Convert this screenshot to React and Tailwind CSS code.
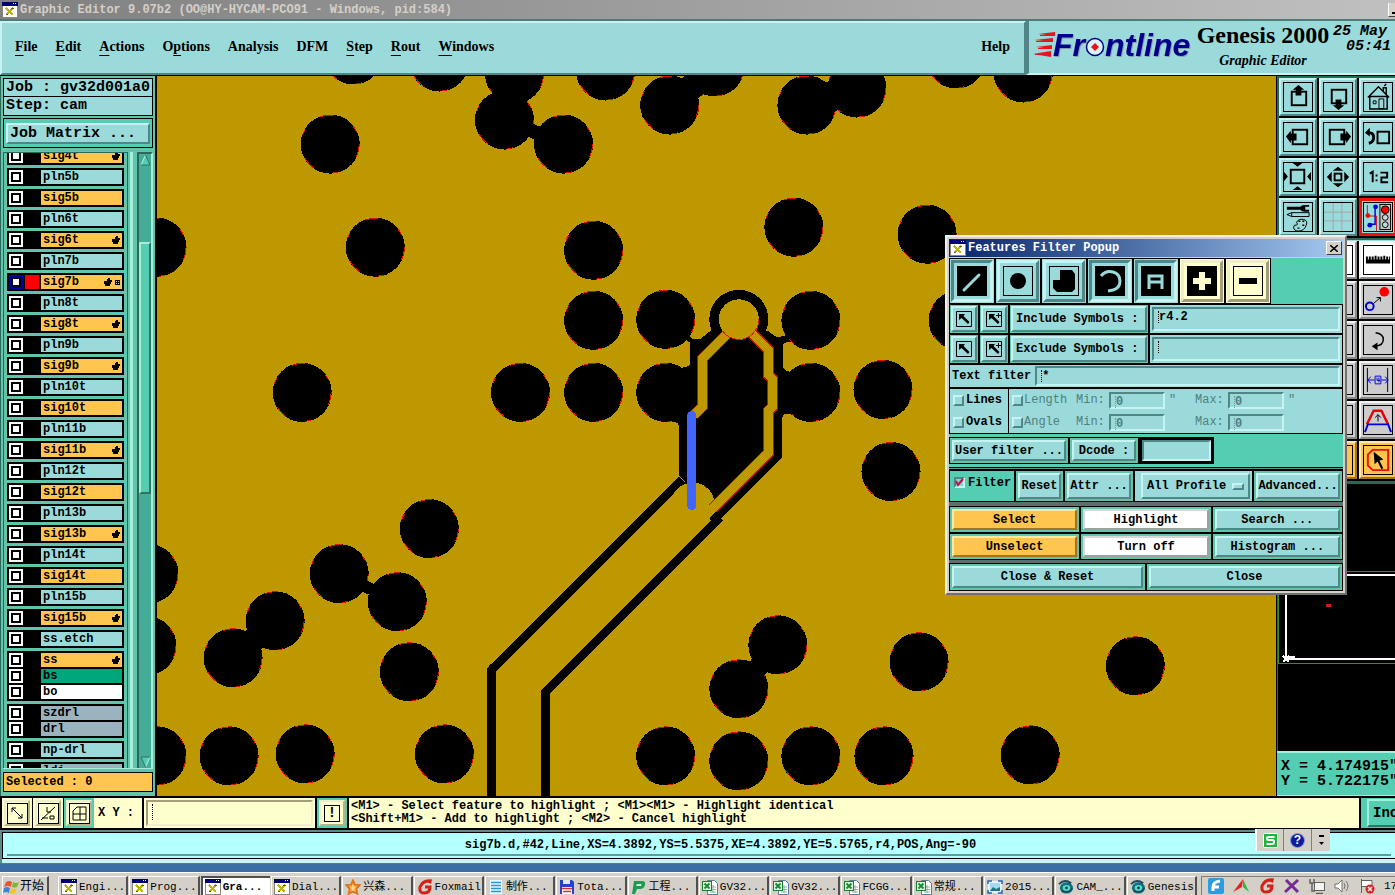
import { useState } from "react";

const RAISED = "border-2 border-t-[#c8f3f3] border-l-[#c8f3f3] border-b-[#4f8686] border-r-[#4f8686]";
const SUNKEN = "border-2 border-t-[#4f8686] border-l-[#4f8686] border-b-[#c8f3f3] border-r-[#c8f3f3]";
const MONO = "font-['Liberation_Mono','Noto_Sans_CJK_SC',monospace]";
const SERIF = "font-['Liberation_Serif',serif]";

const menus = [
    { pre: "", key: "F", post: "ile" },
    { pre: "", key: "E", post: "dit" },
    { pre: "", key: "A", post: "ctions" },
    { pre: "O", key: "p", post: "tions" },
    { pre: "Analysis", key: "", post: "" },
    { pre: "DFM", key: "", post: "" },
    { pre: "", key: "S", post: "tep" },
    { pre: "", key: "R", post: "out" },
    { pre: "", key: "W", post: "indows" },
];

const SIG = "bg-[#ffc54e]";
const PLN = "bg-[#9bdada]";
const DRL = "bg-[#9bb3bf]";

const layerGroups = [
    [{ name: "sig4t", bg: SIG, hand: true }],
    [{ name: "pln5b", bg: PLN }],
    [{ name: "sig5b", bg: SIG }],
    [{ name: "pln6t", bg: PLN }],
    [{ name: "sig6t", bg: SIG, hand: true }],
    [{ name: "pln7b", bg: PLN }],
    [{ name: "sig7b", bg: SIG, hand: true, work: true }],
    [{ name: "pln8t", bg: PLN }],
    [{ name: "sig8t", bg: SIG, hand: true }],
    [{ name: "pln9b", bg: PLN }],
    [{ name: "sig9b", bg: SIG, hand: true }],
    [{ name: "pln10t", bg: PLN }],
    [{ name: "sig10t", bg: SIG }],
    [{ name: "pln11b", bg: PLN }],
    [{ name: "sig11b", bg: SIG, hand: true }],
    [{ name: "pln12t", bg: PLN }],
    [{ name: "sig12t", bg: SIG }],
    [{ name: "pln13b", bg: PLN }],
    [{ name: "sig13b", bg: SIG, hand: true }],
    [{ name: "pln14t", bg: PLN }],
    [{ name: "sig14t", bg: SIG }],
    [{ name: "pln15b", bg: PLN }],
    [{ name: "sig15b", bg: SIG, hand: true }],
    [{ name: "ss.etch", bg: PLN }],
    [
        { name: "ss", bg: SIG, hand: true },
        { name: "bs", bg: "bg-[#00a67c]" },
        { name: "bo", bg: "bg-white" },
    ],
    [
        { name: "szdrl", bg: DRL },
        { name: "drl", bg: DRL },
    ],
    [{ name: "np-drl", bg: PLN }],
    [{ name: "ldi", bg: DRL }],
];

// via clearances on the plane, [x, y]
const vias = [
    [353, 55], [439, 62], [514, 74], [504, 120], [563, 144], [605, 71], [330, 144],
    [669, 105], [714, 67], [806, 105], [856, 88], [955, 59], [1022, 73],
    [157, 247], [375, 247], [593, 250], [793, 227], [926, 234],
    [593, 320], [665, 319], [810, 320], [957, 320],
    [302, 392], [520, 392], [593, 392], [665, 392], [810, 392], [882, 389], [890, 471],
    [429, 528], [339, 573], [397, 601], [149, 573], [233, 657], [275, 620], [147, 645],
    [409, 671], [157, 755], [229, 755], [305, 753], [444, 753],
    [777, 644], [738, 688], [918, 661], [1134, 665],
    [665, 755], [738, 760], [810, 755], [883, 755], [1029, 754],
];

const WindowIcon = () => (
    <svg width="16" height="16" viewBox="0 0 16 16" className="shrink-0" shapeRendering="crispEdges">
        <rect width="16" height="16" fill="#8a8678" />
        <rect x="1" y="1" width="14" height="14" fill="#fff" />
        <rect width="16" height="4" fill="#00006e" />
        <rect x="11" y="1" width="1" height="1" fill="#fff" />
        <rect x="13" y="1" width="1" height="1" fill="#fff" />
        <path d="M4 6l7 7M11 6l-7 7" stroke="#c4b400" strokeWidth="2.4" />
        <path d="M9 7l3-1M4 13l2-1" stroke="#556b00" />
    </svg>
);

const TitleBar = () => (
    <div className={`flex h-[19px] shrink-0 items-center gap-[2px] bg-linear-to-r from-[#808080] to-[#c0c0c0] pl-[2px] ${MONO}`}>
        <WindowIcon />
        <h1 className="text-[12px] font-bold leading-4 whitespace-nowrap text-[#d4d0c8]">
            Graphic Editor 9.07b2 (OO@HY-HYCAM-PCO91 - Windows, pid:584)
        </h1>
        <button
            aria-label="Minimize"
            className="ml-auto flex h-[14px] w-[7px] items-end border-b border-l border-b-[#404040] border-l-white bg-[#d4d0c8] pb-[2px] pl-[3px]"
        >
            <span className="h-[2px] w-full bg-black" />
        </button>
    </div>
);

const Logo = () => (
    <svg width="162" height="42" viewBox="0 0 162 42" className="shrink-0">
        <path d="M5 9l17-2v4zM1 15l19-2v4zM3 22l16-2v4zM0 29l18-3v6z" fill="#e8141c" />
        <path d="M7 10.500h14M3 16.500h16M5 23.500h14M2 29.500h16" stroke="#e8141c" />
        <g
            fontFamily="'Liberation Sans', sans-serif"
            fontSize="32"
            fontWeight="bold"
            fontStyle="italic"
            fill="#00008b"
            className="drop-shadow-[1px_1px_0_#8c9aa8]"
        >
            <text x="20" y="31">Fr</text>
            <text x="72" y="31">ntline</text>
        </g>
        <circle cx="62" cy="22" r="8.5" fill="#d8f4f6" stroke="#00008b" strokeWidth="1.5" />
        <path d="M62 18l4 4-4 4-4-4z" fill="#e8141c" />
    </svg>
);

const Header = () => (
    <header className={`flex h-[56px] shrink-0 border-t-2 border-[#4f7c7a] bg-[#c8f3f3] ${SERIF}`}>
        <nav className={`flex min-w-0 flex-1 items-center gap-[18px] bg-[#9bdada] pr-[14px] pb-[2px] pl-[13px] ${RAISED}`}>
            {menus.map(({ pre, key, post }) => (
                <button key={pre + key + post} className="text-[14px] leading-5 font-bold">
                    {pre}
                    <span className="underline underline-offset-4">{key}</span>
                    {post}
                </button>
            ))}
            <button className="ml-auto text-[14px] leading-5 font-bold">Help</button>
        </nav>
        <div className="flex w-[369px] shrink-0 overflow-hidden border-b-2 border-l-3 border-b-[#c8f3f3] border-l-[#4f8686] bg-[#9bdada] pl-1">
            <div className="pt-1">
                <Logo />
            </div>
            <div className="flex w-[136px] shrink-0 flex-col items-center whitespace-nowrap">
                <span className="text-[24px] leading-7 font-bold">Genesis 2000</span>
                <span className="text-[14px] leading-6 font-bold italic">Graphic Editor</span>
            </div>
            <div className={`flex w-[60px] flex-col pt-[3px] pl-[2px] text-[15px] leading-[15px] font-bold whitespace-nowrap italic ${MONO}`}>
                <span>25 May</span>
                <span className="pl-[13px]">05:41</span>
            </div>
        </div>
    </header>
);

const HandIcon = () => (
    <svg width="8" height="8" viewBox="0 0 8 8" shapeRendering="crispEdges">
        <path d="M4 0h2v2h2v2H7v2H6v2H1V6H0V3h3V1h1z" />
    </svg>
);

const LayerRow = ({ name, bg, hand, work }) => (
    <div className="flex h-[14px] gap-[2px]">
        <input
            type="checkbox"
            aria-label={`Display ${name}`}
            className={`h-[14px] w-[14px] shrink-0 appearance-none border-2 bg-white shadow-[inset_0_0_0_2px_#000] ${
                work ? "border-[#0000a8]" : "border-white"
            }`}
        />
        <span className={`w-[14px] shrink-0 ${work ? "bg-[#ff0000]" : "bg-black"}`} />
        <button className={`flex min-w-0 flex-1 items-center gap-[3px] pr-[2px] pl-[2px] text-[12px] leading-[14px] font-bold ${bg}`}>
            <span className="mr-auto">{name}</span>
            {hand && <HandIcon />}
            {work && (
                <svg width="5" height="5" viewBox="0 0 5 5" shapeRendering="crispEdges">
                    <path d="M.5 .5h4v4h-4zM2.5 0v5M0 2.5h5" fill="none" stroke="#000" />
                </svg>
            )}
        </button>
    </div>
);

const ArrowButton = ({ down }) => (
    <button aria-label={down ? "Scroll down" : "Scroll up"} className="flex h-3 w-full justify-center">
        <svg width="11" height="12" viewBox="0 0 11 12" className={down ? "rotate-180" : ""}>
            <path d="M5.5 1L10 11H1z" fill="#54cdb2" />
            <path d="M5.5 1L1 11" stroke="#b4f3e4" />
            <path d="M1 11h9L5.5 1" fill="none" stroke="#2c7564" />
        </svg>
    </button>
);

const LayerPanel = () => (
    <aside className={`flex w-[157px] shrink-0 flex-col border-r-2 border-l-1 border-black border-l-[#2c6858] bg-[#60c5ab] pr-[2px] pl-[2px] ${MONO}`}>
        <div className="mt-[2px] border border-black bg-[#9bdada] pl-[2px] text-[15px] leading-[17px] font-bold whitespace-nowrap">Job : gv32d001a0</div>
        <div className="border border-t-0 border-black bg-[#9bdada] pl-[2px] text-[15px] leading-[18px] font-bold">Step: cam</div>
        <div className="mt-[2px] border border-black bg-[#54cdb2] p-[2px]">
            <button className={`h-[21px] w-full bg-[#9bdada] pl-[2px] text-left text-[15px] leading-[17px] font-bold ${RAISED}`}>
                Job Matrix ...
            </button>
        </div>
        <div className="mt-1 flex min-h-0 flex-1">
            <div className="flex w-[125px] shrink-0 flex-col gap-[3px] overflow-hidden border-t border-r border-l border-[#2c6858] bg-[#60c5ab] px-[3px]">
                {layerGroups.map((group, i) => (
                    <div key={group[0].name} className={`flex shrink-0 flex-col gap-[2px] bg-black p-[2px] ${i === 0 ? "-mt-[6px]" : ""}`}>
                        {group.map((layer) => (
                            <LayerRow key={layer.name} {...layer} />
                        ))}
                    </div>
                ))}
            </div>
            <div className="ml-[2px] w-[3px] border-r-2 border-l border-r-[#a4efdc] border-l-[#a4efdc]" />
            <div className="ml-1 flex min-w-0 flex-1 flex-col border-t-2 border-r-2 border-l-2 border-t-[#2c6858] border-r-[#a4efdc] border-l-[#2c6858] bg-[#45ad97]">
                <ArrowButton />
                <div className="flex min-h-0 flex-1 flex-col pt-[76px]">
                    <div className="h-[49%] border-2 border-t-[#a4efdc] border-r-[#2c7564] border-b-[#2c7564] border-l-[#a4efdc] bg-[#54cdb2]" />
                </div>
                <ArrowButton down />
            </div>
        </div>
        <div className="h-1 border-t border-[#a4efdc]" />
        <div className="mb-1 h-5 border border-black bg-[#ffc54e] pl-[2px] text-[12px] leading-[18px] font-bold">Selected : 0</div>
    </aside>
);

const Board = () => (
    <svg className="h-full w-full" viewBox="157 76 1119 719" preserveAspectRatio="xMinYMin slice" shapeRendering="crispEdges">
        <rect x="157" y="76" width="1600" height="1200" fill="#bd9800" />
        {vias.map(([x, y]) => (
            <g key={`${x}-${y}`}>
                <circle cx={x} cy={y} r="29.500" />
                <circle cx={x} cy={y} r="29" fill="none" stroke="#e01000" strokeWidth="1" strokeDasharray="13 24 6 20" />
            </g>
        ))}
        {/* necks between touching clearances */}
        <g fill="none" stroke="#000">
            <path d="M513 78L506 115" strokeWidth="36" />
            <path d="M523 127L548 138" strokeWidth="14" />
            <path d="M678 98L706 74" strokeWidth="26" />
            <path d="M818 101L846 91" strokeWidth="30" />
            <path d="M355 581L383 594" strokeWidth="12" />
            <path d="M245 646L264 630" strokeWidth="24" />
            <path d="M750 674L766 657" strokeWidth="20" />
        </g>

        {/* pair entering the keyhole */}
        <path d="M518 795V680L700 498" fill="none" stroke="#000" strokeWidth="62" />
        <path d="M487 795V671Q487 666 490 663L496 669V795zM541 795V688H549V795z" />
        <circle cx="738" cy="319" r="29.500" />
        <path d="M709 331L699 339H692L686 333V340L689 342V364Q687 367 682 367L665 380V421Q677 420 678 425V475L684 481L712 526L719 519L781 457V418Q783 411 790 414L810 412V371L790 371Q783 372 782 365V345Q784 341 790 342L786 334Q783 337 774 336L768 331z" />
        <path d="M518 795V680L694 504" fill="none" stroke="#bd9800" strokeWidth="45" />
        <circle cx="692" cy="504" r="22" fill="#bd9800" />
        <g fill="none" stroke="#c01000" strokeWidth="11">
            <path d="M732 328L702 358V406L693 415" />
            <path d="M745 327L768 350V375L772 379V406L768 410V452L712 508" />
        </g>
        <g fill="none" stroke="#bd9800" strokeWidth="9">
            <path d="M732 328L702 358V406L693 415" />
            <path d="M745 327L768 350V375L772 379V406L768 410V452L698 522" />
        </g>
        <circle cx="738" cy="319" r="20" fill="#bd9800" stroke="#d02000" strokeWidth="1" strokeDasharray="50 76" />
        <path d="M691 415V505" stroke="#4265ff" strokeWidth="9" strokeLinecap="round" />
    </svg>
);

const toolIcons = {
    up: (
        <>
            <rect x="8" y="9" width="15" height="14" fill="none" stroke="#000" strokeWidth="2" />
            <path d="M15 2l6 5h-3v6h-6V7H9z" />
        </>
    ),
    down: (
        <>
            <rect x="8" y="7" width="15" height="14" fill="none" stroke="#000" strokeWidth="2" />
            <path d="M15 28l6-5h-3v-6h-6v6H9z" />
        </>
    ),
    home: (
        <>
            <path d="M4 15L15 4l11 11M6 14v13h18V14M20 9V5h3v7M21 3l2-2M6 14h18" fill="none" stroke="#000" strokeWidth="1.5" />
            <path d="M9.5 18.5h3v3h-3zM15.500 16.500h5v10h-5z" fill="none" stroke="#000" />
        </>
    ),
    left: (
        <>
            <rect x="9" y="7" width="15" height="15" fill="none" stroke="#000" strokeWidth="2" />
            <path d="M2 14l5-6v3h6v7H7v3z" />
        </>
    ),
    right: (
        <>
            <rect x="6" y="7" width="15" height="15" fill="none" stroke="#000" strokeWidth="2" />
            <path d="M28 14l-5-6v3h-6v7h6v3z" />
        </>
    ),
    previous: (
        <>
            <rect x="14" y="9" width="12" height="12" fill="none" stroke="#000" strokeWidth="2" />
            <path d="M5 10q5 0 5 5t-5 6" fill="none" stroke="#000" strokeWidth="3" />
            <path d="M1 10l5-5v9z" />
        </>
    ),
    zoomIn: (
        <>
            <rect x="7" y="7" width="14" height="14" fill="none" stroke="#000" strokeWidth="2" />
            <path d="M9 0h10l-5 4zM9 28h10l-5-4zM0 9v10l4-5zM28 9v10l-4-5z" />
        </>
    ),
    zoomOut: (
        <>
            <rect x="11" y="11" width="7" height="7" fill="none" stroke="#000" strokeWidth="2" />
            <path d="M9 8h11l-5.500-4zM9 21h11l-5.500 4zM8 9v11l-5-5.500zM21 9v11l5-5.500z" />
        </>
    ),
    scale: <path d="M6 11l3-2v11M13 12v2M13 17v2M17 10h7v5h-6v5h7" fill="none" stroke="#000" strokeWidth="2" />,
    draw: (
        <>
            <path d="M3 12l5-2h18v4H8zM8 10v4" fill="none" stroke="#000" />
            <path d="M3 4h14q1-2 4-2h5v2h-4v3h4v2h-5q-3 0-4-2H3z" />
            <path d="M13 20q2-4 7-3 5 1 3 6-2 6-8 6-5 0-5-4 0-3 3-2 2-1 0-3z" fill="none" stroke="#000" />
            <path d="M15 19h2M19 19h2M19 23h2M14 26h2" stroke="#000" strokeWidth="1.5" />
        </>
    ),
    grid: <path d="M9.500 0v29M18.500 0v29M0 9.500h29M0 18.500h29" stroke="#a8a4a4" fill="none" />,
    route: (
        <>
            <path d="M3.500 2v11M3 13.500h10V29" stroke="#e01010" fill="none" />
            <path d="M11.500 4v18H6" stroke="#0000e0" strokeWidth="1.500" fill="none" />
            <circle cx="4" cy="13" r="2.500" fill="#e01010" />
            <circle cx="12" cy="4" r="2.500" fill="#0000e0" />
            <circle cx="6" cy="23" r="2.500" fill="#0000e0" />
            <rect x="16.500" y="1.500" width="11" height="26" fill="#c8c8c8" stroke="#000" />
            <circle cx="22" cy="7" r="4" fill="#ff0000" stroke="#000" />
            <circle cx="22" cy="15" r="3" fill="#c8d8d8" stroke="#000" />
            <circle cx="22" cy="22.500" r="3" fill="#c8d8d8" stroke="#000" />
        </>
    ),
    ruler: <path d="M2 11h2v3h1v-3h2v3h1v-3h2v3h1v-4h2v4h1v-3h2v3h1v-3h2v3h1v-4h2v4h1v-3h2v3h1v-3h1v7H2z" />,
    link: (
        <>
            <circle cx="21" cy="6" r="5" fill="#ff0000" />
            <circle cx="6" cy="21" r="4" fill="none" stroke="#0000e0" strokeWidth="2" />
            <path d="M10 18l7-6M13 12h4v4" stroke="#000" fill="none" />
        </>
    ),
    curve: (
        <>
            <path d="M12 7q8 1 8 7t-8 7" fill="none" stroke="#000" strokeWidth="1.500" />
            <path d="M8 21l6-4v8z" />
        </>
    ),
    distance: (
        <>
            <path d="M3.500 2v25M24.500 2v25" stroke="#000" />
            <path d="M4 14.500h7M18 14.500h7M7 11l-3 3.500 3 3.500M22 11l3 3.500-3 3.500M11.500 10.500h6v8h-6zM13.500 12v3h3M15.500 12v5" stroke="#0000e0" fill="none" />
        </>
    ),
    taper: (
        <>
            <path d="M3 19l7-14h8l7 14" fill="none" stroke="#e80000" strokeWidth="2.500" />
            <path d="M1 27l3-8h21l3 8" fill="none" stroke="#0000e0" strokeWidth="2" />
            <path d="M14.500 16V9M11.500 12l3-3 3 3" stroke="#000" fill="none" />
        </>
    ),
    select: (
        <>
            <path d="M9 4h16v21H9l-5-5V9z" fill="none" stroke="#f01000" strokeWidth="2" />
            <path d="M10 6l10 8-4 1 4 8-2 1-4-8-3 3z" />
        </>
    ),
};

const ToolButton = ({ name, bg = "bg-[#9bdada]", bevel = RAISED }) => (
    <button aria-label={name} className={`h-[38px] w-[38px] p-[2px] ${bg} ${bevel}`}>
        <span className="flex h-[30px] w-[30px] items-center justify-center border border-black">
            <svg width="28" height="28" viewBox="0 0 29 29">
                {toolIcons[name]}
            </svg>
        </span>
    </button>
);

const GREY_BEVEL = "border-2 border-t-[#f4f4f4] border-l-[#f4f4f4] border-b-[#8a8a8a] border-r-[#8a8a8a]";
const ORANGE_BEVEL = "border-2 border-t-[#ffe7a8] border-l-[#ffe7a8] border-b-[#a07420] border-r-[#a07420]";

const viewTools = ["up", "down", "home", "left", "right", "previous", "zoomIn", "zoomOut", "scale", "draw", "grid", "route"];

const editTools = [
    { name: "ruler", bg: "bg-white" },
    { name: "link", bg: "bg-[#cccccc]" },
    { name: "curve", bg: "bg-[#cccccc]" },
    { name: "distance", bg: "bg-[#cccccc]" },
    { name: "taper", bg: "bg-[#cccccc]" },
    { name: "select", bg: "bg-[#ffc54e]", bevel: ORANGE_BEVEL },
];

const ToolPanel = () => (
    <aside className="flex w-[119px] shrink-0 flex-col overflow-hidden border-l border-black bg-[#2c6858]">
        <div className="mt-[2px] ml-[2px] grid w-[120px] shrink-0 grid-cols-[38px_38px_38px] gap-[2px] bg-black pb-[2px]">
            {viewTools.map((name) => (
                <ToolButton
                    key={name}
                    name={name}
                    bevel={name === "route" ? "border-2 border-[#f01010] shadow-[inset_0_0_0_1px_#f01010]" : RAISED}
                />
            ))}
        </div>
        <div className="mt-[2px] ml-[2px] grid w-[120px] shrink-0 grid-cols-[38px_38px_38px] gap-[2px] border-t border-[#9bdada] bg-black pb-[2px]">
            {editTools.flatMap(({ name, bg, bevel = GREY_BEVEL }) => [
                <ToolButton key={`${name} start`} name={`${name} start`} bg={bg} bevel={bevel} />,
                <ToolButton key={`${name} end`} name={`${name} end`} bg={bg} bevel={bevel} />,
                <ToolButton key={name} name={name} bg={bg} bevel={bevel} />,
            ])}
        </div>
        <div className="mt-[3px] ml-px min-h-0 flex-1 overflow-hidden bg-black">
            <svg width="118" height="266" viewBox="0 0 118 266" shapeRendering="crispEdges">
                <path d="M.5 87V179H118M0 87.500H118" fill="none" stroke="#3c8c28" />
                <path d="M8 91V175H118M8 91H118" fill="none" stroke="#fff" strokeWidth="2" />
                <path d="M5 172l6 6M11 172l-6 6M10 173h7" stroke="#fff" strokeWidth="1.500" />
                <rect x="48" y="120" width="5" height="3" fill="#d81820" />
            </svg>
        </div>
        <div className={`h-[45px] shrink-0 border-t-2 border-b border-[#a4efdc] bg-[#54cdb2] pt-[6px] pl-1 text-[15px] leading-[15px] font-bold whitespace-nowrap ${MONO}`}>
            <div>X = 4.174915"</div>
            <div>Y = 5.722175"</div>
        </div>
    </aside>
);

const featureTypes = [
    { name: "Lines", pressed: true, draw: <path d="M7 24L22 9" stroke="#9bdada" strokeWidth="3" strokeLinecap="round" /> },
    { name: "Pads", draw: <circle cx="15" cy="15" r="8" /> },
    { name: "Surfaces", draw: <path d="M11 4h12l3 4v15l-3 3H8l-4-4v-8h7z" /> },
    { name: "Arcs", pressed: true, draw: <path d="M6 10q5-6 12-4t7 9-7 9l-5 1" fill="none" stroke="#9bdada" strokeWidth="3" /> },
    { name: "Text", pressed: true, draw: <path d="M8 23V10h13v13M8 16h13" fill="none" stroke="#9bdada" strokeWidth="3" /> },
    { name: "Positive", pressed: true, yellow: true, draw: <path d="M12 6h6v6h6v6h-6v6h-6v-6H6v-6h6z" fill="#ffffce" /> },
    { name: "Negative", yellow: true, draw: <path d="M6 12h18v6H6z" /> },
];

const FeatureButton = ({ name, pressed, yellow, draw }) => {
    const teal = pressed
        ? "border-t-[#4f8686] border-l-[#4f8686] border-b-[#c8f3f3] border-r-[#c8f3f3]"
        : "border-t-[#c8f3f3] border-l-[#c8f3f3] border-b-[#4f8686] border-r-[#4f8686]";
    const cream = "border-t-[#f0eecb] border-l-[#f0eecb] border-b-[#a39d78] border-r-[#a39d78]";
    return (
        <div className={`p-px ${yellow ? "bg-[#ffffce]" : "bg-[#9bdada]"}`}>
            <button
                aria-label={name}
                aria-pressed={!!pressed}
                className={`flex h-[42px] w-[42px] items-center justify-center border-3 ${yellow ? `bg-[#ffffce] ${cream}` : `bg-[#9bdada] ${teal}`}`}
            >
                <svg width="30" height="30" viewBox="0 0 30 30">
                    <rect x=".5" y=".5" width="29" height="29" fill={pressed ? "#000" : "none"} stroke="#000" />
                    {draw}
                </svg>
            </button>
        </div>
    );
};

const CaretInput = ({ label, value = "", className = "", disabled }) => (
    <div className={`flex items-start bg-[#9bdada] ${SUNKEN} ${className}`}>
        <span className={`mt-[2px] ml-1 h-3 border-l border-dotted ${disabled ? "border-[#6f9c9c]" : "border-black"}`} />
        <input
            aria-label={label}
            defaultValue={value}
            disabled={disabled}
            className={`w-full min-w-0 bg-transparent text-[12px] leading-4 outline-none ${disabled ? "text-[#4f7f7f]" : "font-bold text-black"}`}
        />
    </div>
);

const PickIcon = ({ plus }) => (
    <svg width="16" height="16" viewBox="0 0 16 16">
        <path d="M.5 .5h15v15H.5z" fill="none" stroke="#000" />
        <path d="M3 3h6L7.500 5l6 6-1.500 2-6.500-6L3 9z" />
        {plus && <path d="M12.500 2v5M10 4.500h5" stroke="#000" />}
    </svg>
);

const SymbolRow = ({ label, value }) => (
    <div className="flex h-[28px] gap-[2px]">
        {[false, true].map((plus) => (
            <div key={String(plus)} className="bg-[#60c5ab] p-px">
                <button aria-label={plus ? `Add to ${label}` : `Pick ${label}`} className={`flex h-[26px] w-[26px] items-center justify-center bg-[#9bdada] ${RAISED}`}>
                    <PickIcon plus={plus} />
                </button>
            </div>
        ))}
        <div className="w-[138px] bg-[#60c5ab] p-px">
            <button className={`h-[26px] w-full bg-[#9bdada] pl-[3px] text-left whitespace-nowrap ${RAISED}`}>{label} Symbols :</button>
        </div>
        <div className="flex min-w-0 flex-1 bg-[#9bdada] p-[2px]">
            <CaretInput label={`${label} symbols`} value={value} className="flex-1" />
        </div>
    </div>
);

const PushButton = ({ children, className = "", bg = "bg-[#9bdada]", bevel = RAISED }) => (
    <div className={`flex bg-[#60c5ab] p-[2px] ${className}`}>
        <button className={`w-full whitespace-nowrap ${bg} ${bevel}`}>{children}</button>
    </div>
);

const RangeRow = ({ name, kind, unit }) => (
    <div className="flex h-[22px] items-center">
        <label className="flex h-full w-[59px] items-center gap-[2px] border-r border-black pl-[3px]">
            <input type="checkbox" className={`h-[11px] w-[11px] shrink-0 appearance-none ${RAISED} border`} />
            {name}
        </label>
        <label className="flex w-[67px] items-center gap-px pl-[3px] font-normal text-[#4f7f7f]">
            <input type="checkbox" disabled className={`h-[11px] w-[11px] shrink-0 appearance-none ${RAISED} border`} />
            {kind}
        </label>
        <span className="w-[33px] font-normal text-[#4f7f7f]">Min:</span>
        <CaretInput label={`${kind} min`} value="0" disabled className="h-[17px] w-[56px]" />
        <span className="w-[30px] pl-1 font-normal text-[#4f7f7f]">{unit}</span>
        <span className="w-[33px] font-normal text-[#4f7f7f]">Max:</span>
        <CaretInput label={`${kind} max`} value="0" disabled className="h-[17px] w-[56px]" />
        <span className="pl-1 font-normal text-[#4f7f7f]">{unit}</span>
    </div>
);

const FilterPopup = () => {
    const [filterOn, setFilterOn] = useState(true);
    const white = "border-2 border-t-[#d8d8d8] border-l-[#d8d8d8] border-b-[#a0a0a0] border-r-[#a0a0a0]";
    return (
        <section
            aria-label="Features Filter Popup"
            className={`absolute top-[235px] left-[945px] flex w-[402px] flex-col border-2 border-t-[#f2f0ec] border-r-[#707070] border-b-[#707070] border-l-[#f2f0ec] bg-[#d4d0c8] p-[2px] text-[12px] leading-4 font-bold ${MONO}`}
        >
            <div className="flex h-[18px] items-center gap-[2px] bg-linear-to-r from-[#0a246a] to-[#a6caf0] px-px text-white">
                <WindowIcon />
                <h2>Features Filter Popup</h2>
                <button aria-label="Close popup" className="ml-auto flex h-[14px] w-4 items-center justify-center border border-t-white border-r-[#404040] border-b-[#404040] border-l-white bg-[#d4d0c8]">
                    <svg width="8" height="7" viewBox="0 0 8 7">
                        <path d="M0 0l8 7M8 0L0 7" stroke="#000" strokeWidth="1.500" />
                    </svg>
                </button>
            </div>
            <div className="mt-px flex flex-col bg-[#54cdb2]">
                <div className="flex">
                    <div className="flex gap-[2px] bg-black p-px">
                        {featureTypes.map((type) => (
                            <FeatureButton key={type.name} {...type} />
                        ))}
                    </div>
                </div>
                <div className="flex flex-col gap-[2px] bg-black p-px">
                    <SymbolRow label="Include" value="r4.2" />
                    <SymbolRow label="Exclude" />
                    <label className="flex h-[22px] items-center gap-1 bg-[#9bdada] pr-[2px] pl-[2px] whitespace-nowrap">
                        Text filter
                        <CaretInput label="Text filter" value="*" className="h-[20px] flex-1" />
                    </label>
                    <div className="bg-[#9bdada]">
                        <RangeRow name="Lines" kind="Length" unit={'"'} />
                        <RangeRow name="Ovals" kind="Angle" unit="" />
                    </div>
                </div>
                <div className="mt-[3px] flex h-[27px] w-[265px] gap-[2px] bg-black p-px">
                    <PushButton className="w-[118px]">User filter ...</PushButton>
                    <PushButton className="w-[68px]">Dcode :</PushButton>
                    <div className="flex min-w-0 flex-1 p-[2px]">
                        <input aria-label="Dcode" className={`w-full min-w-0 bg-[#9bdada] outline-none ${SUNKEN}`} />
                    </div>
                </div>
                <div className="mt-[3px] h-[3px] border-y border-black bg-[#5f8f8f]" />
                <div className="flex h-[32px] gap-[2px] bg-black p-px">
                    <label className="relative flex w-[64px] items-start gap-[3px] bg-[#54cdb2] pt-1 pl-1">
                        <input
                            type="checkbox"
                            checked={filterOn}
                            onChange={(e) => setFilterOn(e.target.checked)}
                            className={`mt-[2px] h-[11px] w-[11px] shrink-0 appearance-none bg-[#7dd8c8] ${SUNKEN} border`}
                        />
                        {filterOn && (
                            <svg width="9" height="9" viewBox="0 0 9 9" className="pointer-events-none absolute top-[7px] left-[5px]">
                                <path d="M1 3l2 4 5-6" fill="none" stroke="#c0104c" strokeWidth="2" />
                            </svg>
                        )}
                        Filter
                    </label>
                    <PushButton className="w-[47px]">Reset</PushButton>
                    <PushButton className="w-[68px]">Attr ...</PushButton>
                    <div className="relative flex min-w-0 flex-1 bg-[#9bdada] py-[2px] pr-[2px] pl-[6px]">
                        <select aria-label="Profile" className={`w-full appearance-none bg-[#9bdada] pl-1 ${RAISED}`}>
                            <option>All Profile</option>
                        </select>
                        <span className={`pointer-events-none absolute top-[12px] right-[8px] h-[7px] w-3 border ${RAISED}`} />
                    </div>
                    <PushButton className="w-[88px]">Advanced...</PushButton>
                </div>
                <div className="h-1 bg-[#5f6f6f]" />
                <div className="grid grid-cols-3 gap-[2px] bg-black p-px">
                    <PushButton className="h-[25px]" bg="bg-[#ffc54e]" bevel={ORANGE_BEVEL}>Select</PushButton>
                    <PushButton className="h-[25px]" bg="bg-white" bevel={white}>Highlight</PushButton>
                    <PushButton className="h-[25px]">Search ...</PushButton>
                    <PushButton className="h-[25px]" bg="bg-[#ffc54e]" bevel={ORANGE_BEVEL}>Unselect</PushButton>
                    <PushButton className="h-[25px]" bg="bg-white" bevel={white}>Turn off</PushButton>
                    <PushButton className="h-[25px]">Histogram ...</PushButton>
                </div>
                <div className="h-[3px] bg-[#5f6f6f]" />
                <div className="grid grid-cols-2 gap-[2px] bg-black p-px">
                    <PushButton className="h-[26px]">Close & Reset</PushButton>
                    <PushButton className="h-[26px]">Close</PushButton>
                </div>
            </div>
        </section>
    );
};

const CREAM_BEVEL = "border-2 border-t-[#f0eecb] border-l-[#f0eecb] border-b-[#b8b28c] border-r-[#b8b28c]";

const snapModes = [
    { name: "Snap off", draw: <path d="M5 5l10 10M5 9V5h4M15 11v4h-4" /> },
    { name: "Snap angle", draw: <path d="M3 17L17 4M9 4v5h4M4 15h6M12 13h4v3h-4z" /> },
    { name: "Snap grid", active: true, draw: <path d="M4 8l4-4h9v13H4zM11 4v13M4 11h13" /> },
];

const MessageBar = () => (
    <div className={`flex h-[34px] shrink-0 gap-[2px] overflow-hidden border-t-2 border-b-2 border-l-2 border-black bg-black text-[12px] font-bold ${MONO}`}>
        <div className="flex gap-px">
            {snapModes.map(({ name, active, draw }) => (
                <div key={name} className={`p-[2px] ${active ? "bg-[#54cdb2]" : "bg-[#ffffce]"}`}>
                    <button aria-label={name} className={`flex h-[26px] w-[26px] items-center justify-center bg-[#ffffce] ${CREAM_BEVEL}`}>
                        <svg width="21" height="21" viewBox="0 0 21 21" fill="none" stroke="#000" className="shrink-0">
                            <rect x=".5" y=".5" width="20" height="20" />
                            {draw}
                        </svg>
                    </button>
                </div>
            ))}
        </div>
        <label className="flex items-center gap-[2px]">
            <span className="-ml-[2px] flex h-full w-[48px] items-center bg-[#ffffce] pl-1 whitespace-nowrap">X Y :</span>
            <span className="flex h-full w-[171px] bg-[#ffffce] p-[2px]">
                <span className="flex w-full border-2 border-t-[#a39d78] border-r-[#f0eecb] border-b-[#f0eecb] border-l-[#a39d78] pl-1">
                    <span className="mt-[2px] h-4 border-l border-dotted border-black" />
                    <input aria-label="X Y coordinates" className="w-full min-w-0 bg-transparent outline-none" />
                </span>
            </span>
        </label>
        <div className="bg-[#54cdb2] p-[2px]">
            <button aria-label="Run" className={`flex h-[26px] w-[26px] items-center justify-center bg-[#ffffce] ${CREAM_BEVEL}`}>
                <span className="h-[17px] w-4 border border-black text-[14px] leading-[15px]">!</span>
            </button>
        </div>
        <div className="min-w-0 flex-1 overflow-hidden bg-[#ffffce] pt-[2px] pl-[2px] leading-[13px] whitespace-nowrap">
            <p>{"<M1> - Select feature to highlight ; <M1><M1> - Highlight identical"}</p>
            <p>{"<Shift+M1> - Add to highlight ; <M2> - Cancel highlight"}</p>
        </div>
        <div className="w-[34px] overflow-hidden bg-[#54cdb2] py-px pl-[6px]">
            <button className="h-7 w-[60px] border-2 border-t-[#a4efdc] border-r-[#2c7564] border-b-[#2c7564] border-l-[#a4efdc] pl-1 text-left text-[14px]">Inch</button>
        </div>
    </div>
);

const StatusBar = () => (
    <div className={`relative h-[33px] shrink-0 border-t-2 border-l-2 border-t-[#5c8c8a] border-l-[#5c8c8a] bg-[#c8f3f3] ${MONO}`}>
        <div className="h-[27px] border border-r-0 border-black bg-[#b4ffff] p-1 pb-[2px]">
            <p className="h-full border-b-2 border-[#5c9c9c] pl-[43px] text-center text-[12px] leading-[17px] font-bold">
                sig7b.d,#42,Line,XS=4.3892,YS=5.5375,XE=4.3892,YE=5.5765,r4,POS,Ang=-90
            </p>
        </div>
        <div className="absolute -top-[3px] right-[65px] flex h-[22px] items-center border-l-2 border-white bg-[#d4d0c8]">
            <button aria-label="Input method" className="flex h-full w-[27px] items-center justify-center border-r border-[#808080]">
                <svg width="15" height="15" viewBox="0 0 15 15">
                    <rect x=".5" y=".5" width="14" height="14" rx="1" fill="#22b43a" stroke="#fff" />
                    <path d="M11.500 4H5.500q-1.500 0-1.500 1.500T5.500 7h4q1.500 0 1.500 2t-1.500 2H3.500" fill="none" stroke="#fff" strokeWidth="2" />
                </svg>
            </button>
            <button aria-label="Help" className="flex h-full w-[28px] items-center justify-center border-r border-[#808080]">
                <span className="h-[15px] w-[15px] rounded-full border border-[#8c9cd8] bg-[#0c1c9c] font-['Liberation_Sans',sans-serif] text-[12px] leading-[13px] font-bold text-white">?</span>
            </button>
            <button aria-label="Options" className="flex h-full w-[18px] flex-col items-center justify-center gap-[5px]">
                <span className="h-[2px] w-[5px] bg-black" />
                <svg width="5" height="3" viewBox="0 0 5 3"><path d="M0 0h5L2.500 3z" /></svg>
            </button>
        </div>
    </div>
);

const FoxIcon = () => (
    <svg width="16" height="16" viewBox="0 0 16 16" className="shrink-0">
        <path d="M14 2Q6 1 3 8q-1 6 4 6 6 0 6-6H8" fill="none" stroke="#d42018" strokeWidth="3" />
        <path d="M15 0l-1 5-4-2z" fill="#d42018" />
    </svg>
);

const ExcelIcon = () => (
    <svg width="16" height="16" viewBox="0 0 16 16" className="shrink-0">
        <path d="M5.500 1.500h7l3 3v11h-10z" fill="#fff" stroke="#5c7c9c" />
        <path d="M8 8h6M8 10.500h6M8 13h6M11 6v8" stroke="#8cb4a0" />
        <rect x=".5" y="2.500" width="9" height="9" fill="#e4f2e0" stroke="#1c7c34" />
        <path d="M2.500 4.500l5 5M7.500 4.500l-5 5" stroke="#1c8c34" strokeWidth="2" />
    </svg>
);

const GlobeIcon = () => (
    <svg width="16" height="16" viewBox="0 0 17 16" className="shrink-0">
        <ellipse cx="9" cy="9" rx="7" ry="6" fill="#10707c" />
        <path d="M1 5q6-6 13-1M4 12q7 3 11-3" fill="none" stroke="#204858" strokeWidth="2" />
        <ellipse cx="9" cy="9" rx="4" ry="3" fill="#50e0d0" />
        <circle cx="9" cy="9" r="1.500" fill="#083c58" />
    </svg>
);

const StarIcon = () => (
    <svg width="16" height="16" viewBox="0 0 17 16" className="shrink-0">
        <path d="M8.500 1l2 4.500 5 .5-3.500 4 1 5-4.500-2L4 15l1-5L1.500 6l5-.5z" fill="#ffae4c" stroke="#e07414" strokeWidth="2" />
        <path d="M6 9h5M8.500 6v6" stroke="#fff0d0" />
    </svg>
);

const NoteIcon = () => (
    <svg width="16" height="16" viewBox="0 0 16 16" className="shrink-0">
        <rect x="2" y="1" width="12" height="14" fill="#e8f8ff" />
        <path d="M3 3.500h10M3 6.500h10M3 9.500h10M3 12.500h10" stroke="#2c94d4" strokeWidth="1.500" />
    </svg>
);

const FloppyIcon = () => (
    <svg width="16" height="16" viewBox="0 0 16 16" className="shrink-0">
        <path d="M1 1h12l2 2v12H1z" fill="#2444c8" />
        <rect x="4" y="1" width="7" height="4" fill="#e4e8f4" />
        <rect x="3" y="8" width="10" height="7" fill="#fff" />
        <path d="M3 9.500h10M4 12.500h8" stroke="#d83030" strokeWidth="1.500" />
    </svg>
);

const ProjectIcon = () => (
    <svg width="16" height="16" viewBox="0 0 16 16" className="shrink-0">
        <path d="M3 2h8q4 0 3 4t-5 4H6l-2 5H1z" fill="#1c9c54" />
        <path d="M6 5h4q1 0 0 2H5z" fill="#d8f4e0" />
    </svg>
);

const PhotoIcon = () => (
    <svg width="16" height="16" viewBox="0 0 16 16" className="shrink-0">
        <rect x="1" y="2" width="14" height="12" fill="#e8f4fc" />
        <path d="M1 5V2h4M11 2h4v3M15 11v3h-4M5 14H1v-3" fill="none" stroke="#2464b4" strokeWidth="1.500" />
        <rect x="3" y="4" width="10" height="8" fill="#a4d8f4" />
        <path d="M3 12l3-4 3 2 4-2v4z" fill="#1c7484" />
    </svg>
);

const tasks = [
    { text: "Engi...", Icon: WindowIcon },
    { text: "Prog...", Icon: WindowIcon },
    { text: "Gra...", Icon: WindowIcon, active: true },
    { text: "Dial...", Icon: WindowIcon },
    { text: "兴森...", Icon: StarIcon },
    { text: "Foxmail", Icon: FoxIcon },
    { text: "制作...", Icon: NoteIcon },
    { text: "Tota...", Icon: FloppyIcon },
    { text: "工程...", Icon: ProjectIcon },
    { text: "GV32...", Icon: ExcelIcon },
    { text: "GV32...", Icon: ExcelIcon },
    { text: "FCGG...", Icon: ExcelIcon },
    { text: "常规...", Icon: ExcelIcon },
    { text: "2015...", Icon: PhotoIcon },
    { text: "CAM_...", Icon: GlobeIcon },
    { text: "Genesis", Icon: GlobeIcon },
];

const Taskbar = () => (
    <footer className={`flex h-[23px] shrink-0 overflow-hidden border-t border-white bg-[#d4d0c8] pt-[3px] pl-[2px] text-[11px] leading-[18px] whitespace-nowrap ${MONO}`}>
        <button className="flex h-5 w-[47px] shrink-0 items-center border-t border-r-2 border-l border-t-white border-r-[#505050] border-l-white text-[12px]">
            <svg width="17" height="16" viewBox="0 0 17 16" className="shrink-0">
                <path d="M3 3q3-2 6 0L8 8Q5 6 1 8z" fill="#e8582c" />
                <path d="M10 3q3 2 6 0l-2 5q-3 1-5 0z" fill="#7cb82c" />
                <path d="M1 9q3-2 6 0l-1 5q-3-2-6 0z" fill="#3c84d8" />
                <path d="M8 9q3 2 6 0l-2 5q-3 1-5 0z" fill="#f8c424" />
            </svg>
            开始
        </button>
        <div className="ml-[9px] flex min-w-0 flex-1 gap-px">
            {tasks.map(({ text, Icon, active }, i) => (
                <button
                    key={i}
                    className={`flex h-5 min-w-0 flex-1 items-center gap-[2px] overflow-hidden pl-[2px] ${
                        active
                            ? "border-t-2 border-l-2 border-[#505050] bg-white font-bold"
                            : "border-t border-r-2 border-l border-t-white border-r-[#505050] border-l-white"
                    }`}
                >
                    <Icon />
                    {text}
                </button>
            ))}
        </div>
        <div className="ml-1 flex w-[194px] shrink-0 items-center gap-[9px] border-t border-l border-[#808080] pl-[6px]">
            <svg width="16" height="16" viewBox="0 0 16 16" className="shrink-0">
                <rect width="16" height="16" rx="2" fill="#2c9ce0" />
                <path d="M5 13V9q0-5 7-6M5 9h6" fill="none" stroke="#fff" strokeWidth="3" />
            </svg>
            <svg width="17" height="16" viewBox="0 0 17 16" className="shrink-0">
                <path d="M10 1L0 14l9-5z" fill="#e82020" />
                <path d="M10 1v8l6 5z" fill="#20c040" />
            </svg>
            <FoxIcon />
            <svg width="16" height="16" viewBox="0 0 16 16" className="shrink-0">
                <path d="M2 2l12 12M14 2L1 14" stroke="#742c94" strokeWidth="3" />
            </svg>
            <svg width="16" height="16" viewBox="0 0 16 16" className="shrink-0" fill="none" stroke="#606060">
                <rect x="5.500" y="4.500" width="10" height="8" fill="#f4f4f4" />
                <path d="M7 15.500h7M1 1v4h4V1M3 5v8h3" strokeWidth="1.500" />
            </svg>
            <svg width="16" height="16" viewBox="0 0 16 16" className="shrink-0" fill="none" stroke="#707070">
                <path d="M1 6h3l4-4v12l-4-4H1z" fill="#fff" />
                <path d="M10 5q2 3 0 6M12 3q4 5 0 10" />
            </svg>
            <svg width="16" height="16" viewBox="0 0 16 16" className="shrink-0">
                <path d="M2.500 1v14M3 2.500h10v6H3" fill="#fff" stroke="#606060" />
                <circle cx="11" cy="11" r="4.500" fill="#dc2020" />
                <path d="M9 9l4 4M13 9l-4 4" stroke="#fff" strokeWidth="1.500" />
            </svg>
            <span>17</span>
        </div>
    </footer>
);

const App = () => (
    <div className="relative flex h-screen flex-col overflow-hidden bg-[#d4d0c8] text-black">
        <TitleBar />
        <Header />
        <main className="flex min-h-0 flex-1 border-t border-black bg-black">
            <LayerPanel />
            <div className="min-w-0 flex-1 overflow-hidden">
                <Board />
            </div>
            <ToolPanel />
        </main>
        <MessageBar />
        <StatusBar />
        <div className="h-[9px] shrink-0 border-t border-[#707070] bg-[#3a6ea5]" />
        <Taskbar />
        <FilterPopup />
    </div>
);

export default App;
